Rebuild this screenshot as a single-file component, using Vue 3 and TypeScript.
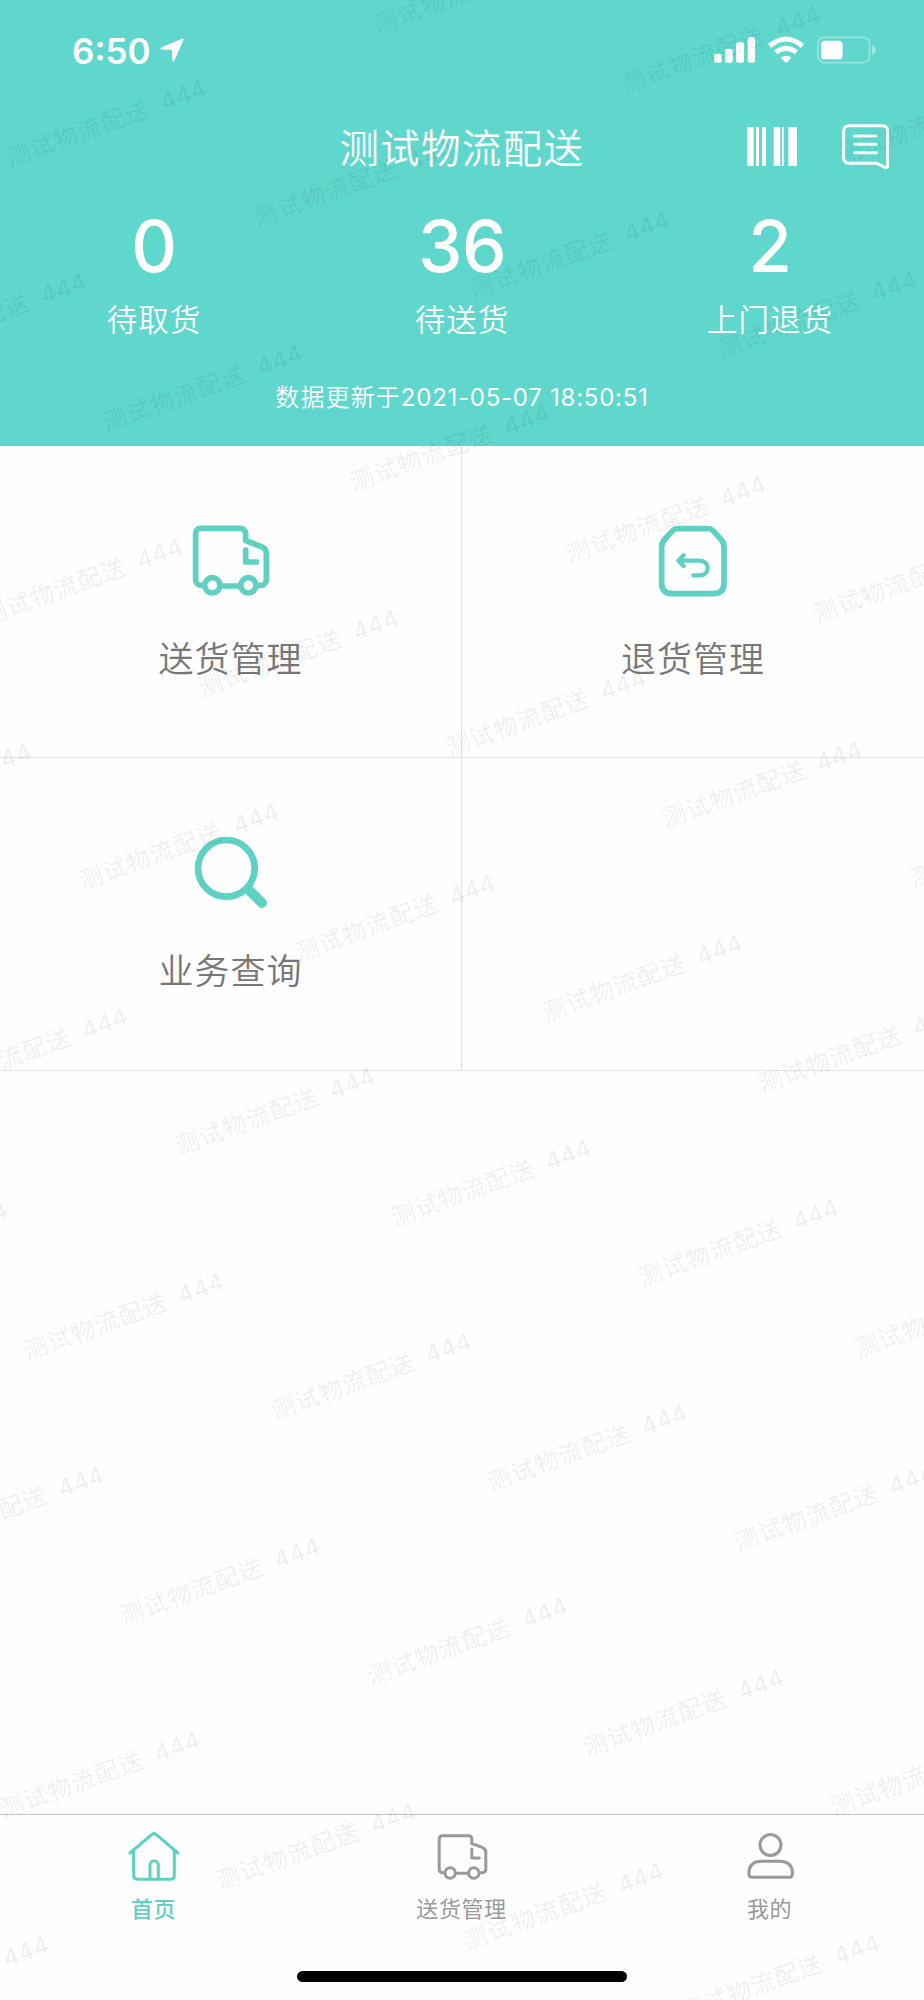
<script setup lang="ts">
interface Stat { value: number; label: string }
interface Entry { label: string; icon: 'truck' | 'return' | 'search' | '' }
interface Mark { x: number; y: number }

const stats: Stat[] = [
  { value: 0, label: '待取货' },
  { value: 36, label: '待送货' },
  { value: 2, label: '上门退货' },
]

const entries: Entry[] = [
  { label: '送货管理', icon: 'truck' },
  { label: '退货管理', icon: 'return' },
  { label: '业务查询', icon: 'search' },
  { label: '', icon: '' },
]

// Watermark lattice: pairs of labels repeated along two slanted axes.
const marks: Mark[] = []
for (let row = -3; row <= 9; row++) {
  for (let col = -5; col <= 4; col++) {
    const x = 257 + row * 96.2 + col * 463.5
    const y = 228 + row * 264.9 + col * 131.3
    for (const m of [{ x, y }, { x: x + 216, y: y + 71.5 }]) {
      if (m.x > -208 && m.x < 920 && m.y > 5 && m.y < 2070) marks.push(m)
    }
  }
}
</script>

<template>
  <div class="screen">
    <header class="header">
      <div class="status">
        <span class="time">6:50</span>
        <svg class="locate" viewBox="0 0 72 72"><path d="M66 2Q72 0 70 7L44 66Q40 73 36 66V38Q36 35 33 35H6Q-2 32 5 28Z" fill="#fff" /></svg>
        <svg class="signals" viewBox="0 0 500 100">
          <g fill="#fff">
            <rect x="6" y="62" width="23" height="27" rx="6" />
            <rect x="39" y="47" width="23" height="42" rx="6" />
            <rect x="72" y="28" width="24" height="61" rx="6" />
            <rect x="107" y="12" width="22" height="77" rx="6" />
            <path d="M222 90L206 74Q222 62 238 74Z" />
          </g>
          <g fill="none" stroke="#fff" stroke-width="15">
            <path d="M173 39Q222 -3 271 39" />
            <path d="M191 58Q222 34 253 58" />
          </g>
          <rect x="318" y="13" width="155" height="76" rx="19" fill="none" stroke="#fff" stroke-opacity=".35" stroke-width="5" />
          <rect x="327" y="23" width="65" height="56" rx="11" fill="#fff" />
          <path d="M481 37Q491 42 491 51T481 65Z" fill="#fff" fill-opacity=".45" />
        </svg>
      </div>
      <div class="nav">
        <h1>测试物流配送</h1>
        <svg class="barcode" viewBox="0 0 150 117"><path d="M0 0h20v117H0zM27 0h9v117h-9zM45 0h12v117H45zM80 0h20v117H80zM105 0h5v117h-5zM124 0h26v117h-26z" fill="#fff" /></svg>
        <svg class="message" viewBox="0 0 142 136" fill="none" stroke="#fff" stroke-linecap="round" stroke-linejoin="round">
          <path d="M22 5H120Q137 5 137 22V125Q137 132 129 130L105 118H22Q5 118 5 101V22Q5 5 22 5Z" stroke-width="9" />
          <path d="M37 36H103M37 61H103M37 86H103" stroke-width="9" />
        </svg>
      </div>
      <div class="stats">
        <div v-for="s in stats" :key="s.label" class="stat">
          <div class="value">{{ s.value }}</div>
          <div class="label">{{ s.label }}</div>
        </div>
      </div>
      <div class="updated">数据更新于<span class="stamp">2021-05-07 18:50:51</span></div>
    </header>

    <main class="grid">
      <div v-for="(e, i) in entries" :key="i" class="cell">
        <svg v-if="e.icon" class="entry-icon" viewBox="0 0 240 222" fill="none" stroke="#5fd1c2" stroke-width="17" stroke-linecap="round" stroke-linejoin="round">
          <template v-if="e.icon === 'truck'">
            <path d="M38 187H30a16 16 0 0 1-16-16V30a14 14 0 0 1 14-14H148a16 16 0 0 1 16 16V53L211 71Q226 77 226 91V171a16 16 0 0 1-16 16H202M90 189H146" />
            <path d="M164 81V117H197" />
            <circle cx="64" cy="187" r="23" /><circle cx="172" cy="187" r="23" />
          </template>
          <template v-else-if="e.icon === 'return'">
            <path d="M74 17H166Q174 17 180 23L203 48Q213 59 213 72V180Q213 212 181 212H58Q26 212 26 180V72Q26 59 36 48L59 23Q65 17 74 17Z" />
            <path d="M92 97L76 113L92 129M76 113H142a22 22 0 0 1 0 44H121" stroke-width="13" />
          </template>
          <template v-else>
            <circle cx="106" cy="100" r="85" stroke-width="20" />
            <path d="M176 167L213 204" stroke-width="30" />
          </template>
        </svg>
        <div v-if="e.label" class="entry-label">{{ e.label }}</div>
      </div>
    </main>

    <nav class="tabs">
      <a class="tab active">
        <svg viewBox="0 0 165 160">
          <path d="M9 69L74 14Q81 8 88 14L153 69M20 62V136Q20 148 32 148H130Q142 148 142 136V62M69 148V105a12.5 12.5 0 0 1 25 0V148" />
        </svg>
        <span>首页</span>
      </a>
      <a class="tab">
        <svg viewBox="2 0 165 160">
          <path d="M31 128H25Q14.500 128 14.500 117V27Q14.500 17 25 17H103Q112.500 17 112.500 27V41L144 52Q154.500 57 154.500 67V117Q154.500 128 144 128H136M65 130H101" />
          <path d="M112.500 58V84H135" />
          <circle cx="47.500" cy="129" r="15.500" /><circle cx="118.500" cy="129" r="15.500" />
        </svg>
        <span>送货管理</span>
      </a>
      <a class="tab">
        <svg viewBox="0 0 165 160">
          <circle cx="82.500" cy="45" r="31.500" />
          <path d="M54 94H112Q148 96 148.500 129Q149 142 138 142H28Q17 142 17.500 129Q18 96 54 94Z" />
        </svg>
        <span>我的</span>
      </a>
    </nav>
    <div class="home-bar"></div>

    <svg class="watermark" viewBox="0 0 924 2000" aria-hidden="true">
      <text v-for="(m, i) in marks" :key="i" :transform="`translate(${m.x} ${m.y}) rotate(-20)`" x="1" y="-1">测试物流配送<tspan class="digits" dx="13">444</tspan></text>
    </svg>
  </div>
</template>

<style>
body { margin: 0; background: #fefefe; }
</style>

<style scoped>
.screen {
  position: relative;
  display: flex;
  flex-direction: column;
  width: 924px;
  height: 2000px;
  overflow: hidden;
  background: #fefefe;
  font-family: "Noto Sans CJK SC", sans-serif;
}
.header { height: 446px; background: #5fd7cd; color: #fff; }
.status { display: flex; height: 100px; box-sizing: border-box; padding: 33px 45px 0 72px; }
.time { font: 600 35px/36px Inter, sans-serif; letter-spacing: 0; }
.locate { width: 24px; height: 24px; margin: 5px 0 0 9px; }
.signals { width: 166.700px; height: 33.300px; margin-left: auto; }
.nav { display: flex; height: 93px; align-items: center; justify-content: flex-end; }
h1 {
  flex: 1;
  margin: 0 -177px 1px 0;
  text-align: center;
  font-size: 39.500px;
  line-height: 60px;
  font-weight: 350;
  letter-spacing: 1.300px;
}
.barcode { width: 50px; height: 39px; margin-right: 45px; }
.message { width: 47.300px; height: 45.300px; margin-right: 35px; }
.stats { display: grid; grid-template-columns: repeat(3, 1fr); margin-top: 1px; text-align: center; }
.value { height: 103px; font: 500 71px/105px Inter, sans-serif; letter-spacing: -.5px; }
.label { height: 42px; font-size: 30.500px; line-height: 42px; font-weight: 350; letter-spacing: 1px; }
.updated { margin-top: 39px; text-align: center; font-size: 24px; line-height: 36px; font-weight: 350; letter-spacing: 1.100px; }
.stamp { font-family: Inter, sans-serif; font-weight: 400; letter-spacing: .75px; }
.grid { display: grid; grid-template-columns: 461px 462px; grid-template-rows: 311px 312px; gap: 1px; height: 625px; background: #e2e2e2; }
.cell { display: flex; flex-direction: column; align-items: center; background: #fefefe; }
.entry-icon { width: 80px; height: 74px; margin-top: 77px; }
.entry-label { margin-top: 35px; font-size: 35px; line-height: 50px; font-weight: 350; letter-spacing: 1px; color: #777; }
.tabs { display: grid; grid-template-columns: repeat(3, 1fr); height: 186px; margin-top: auto; box-sizing: border-box; border-top: 1px solid #c4c4c4; }
.tab { display: flex; flex-direction: column; align-items: center; padding: 15px 0 0; color: #999; font-size: 22px; line-height: 32px; letter-spacing: .6px; }
.tab.active { color: #5fd1c2; font-weight: 500; }
.tab svg { width: 55px; height: 53.300px; fill: none; stroke: currentColor; stroke-width: 9; stroke-linecap: round; stroke-linejoin: round; }
.tab span { margin: 8px 1px 0 0; }
.home-bar { position: absolute; left: 297px; bottom: 18px; width: 330px; height: 11px; border-radius: 6px; background: #000; }
.watermark { position: absolute; inset: 0; width: 924px; height: 2000px; pointer-events: none; }
.watermark text { font-size: 24px; font-weight: 400; letter-spacing: 1.100px; fill: #000; fill-opacity: .07; }
.watermark .digits { font-family: Inter, sans-serif; font-size: 24px; letter-spacing: .3px; }
.grid { box-sizing: border-box; padding-bottom: 1px; }
</style>
